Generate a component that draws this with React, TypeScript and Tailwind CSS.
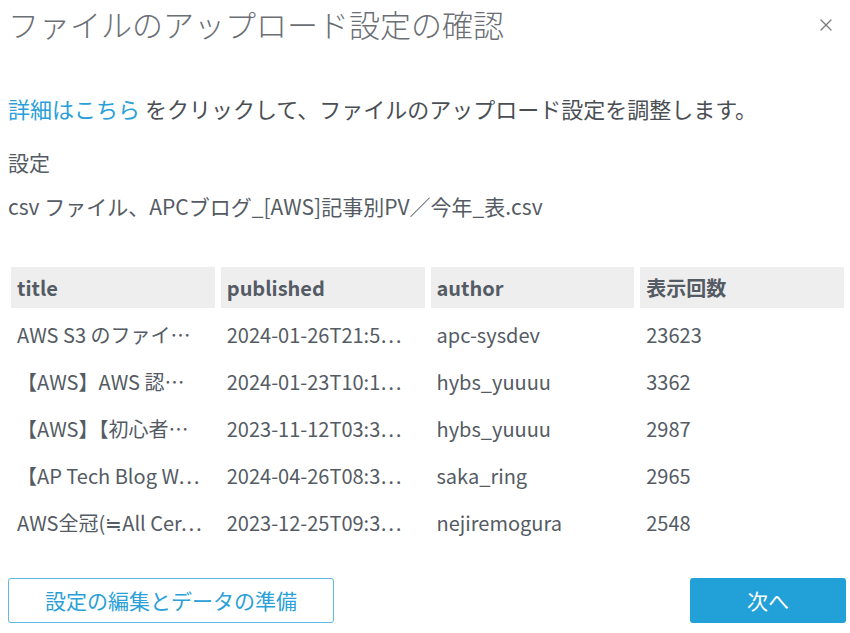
import React from 'react';
import { X } from 'lucide-react';

const headers = ['title', 'published', 'author', '表示回数'];

// セル幅に収まる分だけ表示（元データは省略表示）
const rows = [
  ['AWS S3 のファイ…', '2024-01-26T21:5…', 'apc-sysdev', '23623'],
  ['【AWS】AWS 認…', '2024-01-23T10:1…', 'hybs_yuuuu', '3362'],
  ['【AWS】【初心者…', '2023-11-12T03:3…', 'hybs_yuuuu', '2987'],
  ['【AP Tech Blog W…', '2024-04-26T08:3…', 'saka_ring', '2965'],
  ['AWS全冠(≒All Cer…', '2023-12-25T09:3…', 'nejiremogura', '2548'],
];

const App: React.FC = () => {
  return (
    <div
      className="w-[850px] h-[633px] bg-white text-[#545b64] overflow-hidden"
      style={{ fontFamily: '"Noto Sans CJK JP", "Noto Sans", sans-serif' }}
    >
      <div className="flex items-start justify-between pt-[5px] pl-[8px] pr-[14px]">
        <h1 className="text-[31px] leading-[37px] font-light text-[#6b6f75]">
          ファイルのアップロード設定の確認
        </h1>
        <button className="mt-[10px] text-[#7a7a7a]">
          <X size={20} strokeWidth={1.5} />
        </button>
      </div>

      <div className="pl-[8px] mt-[51px] text-[22px] leading-[30px]">
        <p className="text-[#4a4f55]">
          <a className="text-[#2a9fd8]">詳細はこちら</a> をクリックして、ファイルのアップロード設定を調整します。
        </p>
        <p className="mt-[24px] text-[21px]">設定</p>
        <p className="mt-[14px] text-[21px]">csv ファイル、APCブログ_[AWS]記事別PV／今年_表.csv</p>
      </div>

      <div className="ml-[11px] w-[833px] mt-[46px] grid grid-cols-4 gap-[6px] text-[20px]">
        {headers.map((h) => (
          <div key={h} className="h-[41px] bg-[#eeeeee] px-[6px] flex items-center font-bold text-[#545b64]">
            {h}
          </div>
        ))}
        {rows.map((r, i) =>
          r.map((c, j) => (
            <div key={`${i}-${j}`} className="h-[41px] px-[6px] flex items-center whitespace-nowrap">
              {c}
            </div>
          ))
        )}
      </div>

      <div className="flex justify-between items-center mt-[35px] pl-[8px] pr-[4px]">
        <button className="w-[326px] h-[45px] border border-[#5db8e3] rounded-[3px] text-[21px] text-[#2a9fd8]">
          設定の編集とデータの準備
        </button>
        <button className="w-[156px] h-[45px] bg-[#22a0d8] rounded-[3px] text-[21px] text-white">
          次へ
        </button>
      </div>
    </div>
  );
};

export default App;
